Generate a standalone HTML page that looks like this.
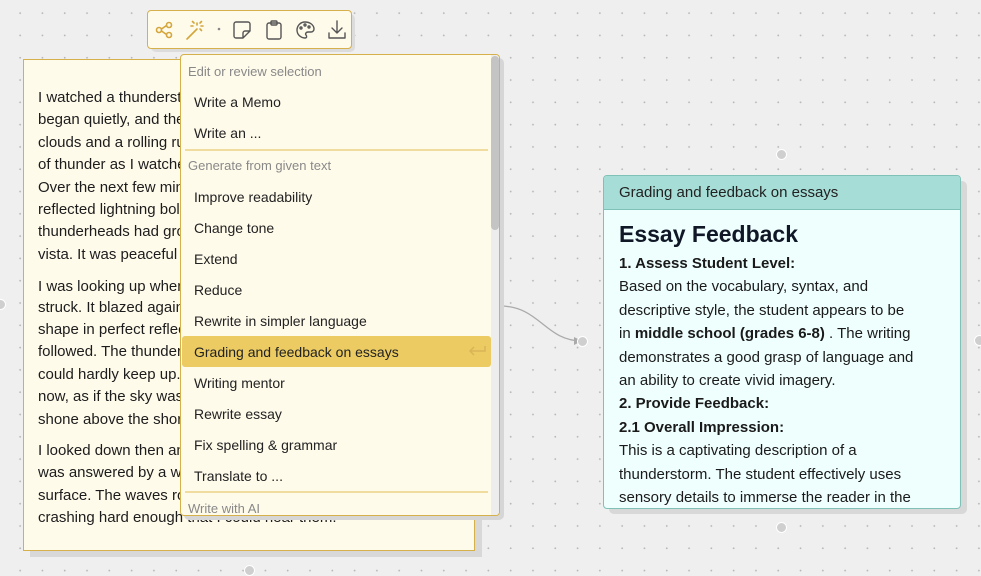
<!DOCTYPE html>
<html><head><meta charset="utf-8"><style>
*{margin:0;padding:0;box-sizing:border-box}
body{width:981px;height:575px;overflow:hidden;background:#efefef;font-family:"Liberation Sans",sans-serif;position:relative;
background-image:radial-gradient(circle,#b8b8b8 0.8px,transparent 1.1px);background-size:22.3px 22.3px;background-position:9px 2px}
.abs{position:absolute}
.line{position:absolute;white-space:nowrap;font-size:15px;color:#1c1c1c}
.mi{position:absolute;left:13px;font-size:14px;color:#222;white-space:nowrap}
.mh{position:absolute;left:7px;font-size:13px;color:#888;white-space:nowrap}
.r{position:absolute;left:15px;font-size:15px;color:#1a1a1a;white-space:nowrap}
.dot{position:absolute;width:11px;height:11px;border-radius:50%;background:#cfcfcf;border:1.5px solid #fff}
</style></head><body>

<svg class="abs" style="left:0;top:0" width="981" height="575">
<path d="M500 306 C540 306 545 341 582 341" stroke="#aaa" stroke-width="1.3" fill="none"/>
<path d="M574 337 L582 341 L574 345Z" fill="#aaa"/>
</svg>
<div class="dot" style="left:577px;top:336px"></div>
<div class="dot" style="left:776px;top:149px"></div>
<div class="dot" style="left:776px;top:522px"></div>
<div class="dot" style="left:-5px;top:299px"></div>
<div class="dot" style="left:244px;top:565px"></div>
<div class="dot" style="left:974px;top:335px"></div>

<div class="abs" style="left:30px;top:65px;width:452px;height:492px;background:#d8d8d8"></div>
<div class="abs" style="left:23px;top:59px;width:452px;height:492px;background:#fffbeb;border:1.5px solid #d6b04a;overflow:hidden">
<div class="line" style="left:14px;top:29px">I watched a thunderstorm roll in over the lake one evening. It</div>
<div class="line" style="left:14px;top:51px">began quietly, and then I saw the flashes of lightning in the</div>
<div class="line" style="left:14px;top:74px">clouds and a rolling rumble rising. I heard the first deep roll</div>
<div class="line" style="left:14px;top:96px">of thunder as I watched the storm approach across the water.</div>
<div class="line" style="left:14px;top:119px">Over the next few minutes, the lake's dark surface</div>
<div class="line" style="left:14px;top:141px">reflected lightning bolts from the sky. The towering</div>
<div class="line" style="left:14px;top:163px">thunderheads had grown into an impressive, dramatic</div>
<div class="line" style="left:14px;top:186px">vista. It was peaceful and wild at once.</div>
<div class="line" style="left:14px;top:218px">I was looking up when a brilliant bolt of lightning</div>
<div class="line" style="left:14px;top:239px">struck. It blazed against the clouds and I saw its</div>
<div class="line" style="left:14px;top:261px">shape in perfect reflection on the lake. Thunder</div>
<div class="line" style="left:14px;top:283px">followed. The thunder came so quickly that I</div>
<div class="line" style="left:14px;top:306px">could hardly keep up. The rain was falling hard</div>
<div class="line" style="left:14px;top:328px">now, as if the sky was open, and lightning still</div>
<div class="line" style="left:14px;top:351px">shone above the shore.</div>
<div class="line" style="left:14px;top:382px">I looked down then and saw that the storm</div>
<div class="line" style="left:14px;top:404px">was answered by a wild chop on the lake's</div>
<div class="line" style="left:14px;top:427px">surface. The waves rose higher and were</div>
<div class="line" style="left:14px;top:449px">crashing hard enough that I could hear them.</div>
</div>

<div class="abs" style="left:151px;top:14px;width:204px;height:38px;background:#dcdcdc;border-radius:5px"></div>
<div class="abs" style="left:147px;top:10px;width:205px;height:39px;background:#fffbeb;border:1.5px solid #d6b04a;border-radius:4px">
<svg class="abs" style="left:0;top:0" width="205" height="39" fill="none" stroke-linecap="round" stroke-linejoin="round">
<g stroke="#d4a53a" stroke-width="1.6">
<circle cx="11" cy="19" r="2.5"/><circle cx="21" cy="14" r="2.5"/><circle cx="21" cy="24" r="2.5"/>
<path d="M13.5 18 L18.5 14.5 M13.5 20 L18.5 23.5"/>
<path d="M39 28 L49 18"/><path d="M49 12 v2 M53 15 h2 M45 15 h-2 M52 12 l1.5-1.5 M46 12 l-1.5-1.5 M52 18 l1.5 1.5"/>
</g>
<circle cx="71" cy="18" r="1.3" fill="#888"/>
<g stroke="#555" stroke-width="1.4">
<path d="M88 11 h12 a2 2 0 0 1 2 2 v7 l-7 7 h-7 a2 2 0 0 1-2-2 v-12 a2 2 0 0 1 2-2z M102 20 h-5 a2 2 0 0 0-2 2 v5"/>
<rect x="119" y="12" width="14" height="16" rx="2"/><rect x="123" y="10" width="6" height="4" rx="1"/>
<path d="M157 11 a8 8 0 1 0 0 16 c2 0 2-2 1-3 c-1-1 0-3 2-3 h3 a3 3 0 0 0 3-3 c0-4-4-7-9-7z"/>
<circle cx="153" cy="17" r="1"/><circle cx="157" cy="14" r="1"/><circle cx="161" cy="16" r="1"/>
<path d="M189 10 v12 M184 17 l5 5 5-5 M181 22 v5 h16 v-5"/>
</g>
</svg>
</div>

<div class="abs" style="left:184px;top:58px;width:320px;height:462px;background:#d6d6d6;border-radius:5px"></div>
<div class="abs" style="left:180px;top:54px;width:320px;height:462px;background:#fffbeb;border:1.5px solid #d6b04a;border-radius:4px;overflow:hidden">
<div class="abs" style="right:0;top:0;width:8px;height:100%;background:#ededed"></div>
<div class="abs" style="right:0;top:1px;width:8px;height:174px;background:#c4c4c4;border-radius:4px"></div>
<div class="mh" style="top:9px">Edit or review selection</div>
<div class="mi" style="top:39px">Write a Memo</div>
<div class="mi" style="top:70px">Write an ...</div>
<div class="abs" style="left:4px;top:94px;width:303px;height:1.5px;background:#f0dc9f"></div>
<div class="mh" style="top:103px">Generate from given text</div>
<div class="mi" style="top:134px">Improve readability</div>
<div class="mi" style="top:165px">Change tone</div>
<div class="mi" style="top:196px">Extend</div>
<div class="mi" style="top:227px">Reduce</div>
<div class="mi" style="top:258px">Rewrite in simpler language</div>
<div class="abs" style="left:1px;top:281px;width:309px;height:31px;background:#ebcb62;border-radius:3px"></div>
<div class="mi" style="top:289px">Grading and feedback on essays</div>
<svg class="abs" style="left:286px;top:289px" width="20" height="14" fill="none" stroke="#d9b557" stroke-width="1.5"><path d="M18 2 v5 h-15 M7 3 l-4 4 4 4"/></svg>
<div class="mi" style="top:320px">Writing mentor</div>
<div class="mi" style="top:351px">Rewrite essay</div>
<div class="mi" style="top:382px">Fix spelling &amp; grammar</div>
<div class="mi" style="top:413px">Translate to ...</div>
<div class="abs" style="left:4px;top:436px;width:303px;height:1.5px;background:#f0dc9f"></div>
<div class="mh" style="top:446px">Write with AI</div>
</div>

<div class="abs" style="left:609px;top:181px;width:358px;height:333px;background:#d8d8d8;border-radius:5px"></div>
<div class="abs" style="left:603px;top:175px;width:358px;height:334px;background:#effffe;border:1.5px solid #7fc1b6;border-radius:4px;overflow:hidden">
<div class="abs" style="left:0;top:0;width:100%;height:34px;background:#a6ddd6;border-bottom:1.5px solid #7fc1b6"></div>
<div class="r" style="top:8px;color:#222">Grading and feedback on essays</div>
<div class="r" style="top:45px;font-size:23px;font-weight:bold;color:#101828">Essay Feedback</div>
<div class="r" style="top:79px;font-weight:bold">1. Assess Student Level:</div>
<div class="r" style="top:102px">Based on the vocabulary, syntax, and</div>
<div class="r" style="top:126px">descriptive style, the student appears to be</div>
<div class="r" style="top:149px">in <b>middle school (grades 6-8)</b> . The writing</div>
<div class="r" style="top:173px">demonstrates a good grasp of language and</div>
<div class="r" style="top:196px">an ability to create vivid imagery.</div>
<div class="r" style="top:219px;font-weight:bold">2. Provide Feedback:</div>
<div class="r" style="top:243px;font-weight:bold">2.1 Overall Impression:</div>
<div class="r" style="top:266px">This is a captivating description of a</div>
<div class="r" style="top:290px">thunderstorm. The student effectively uses</div>
<div class="r" style="top:313px">sensory details to immerse the reader in the</div>
</div>
</body></html>
